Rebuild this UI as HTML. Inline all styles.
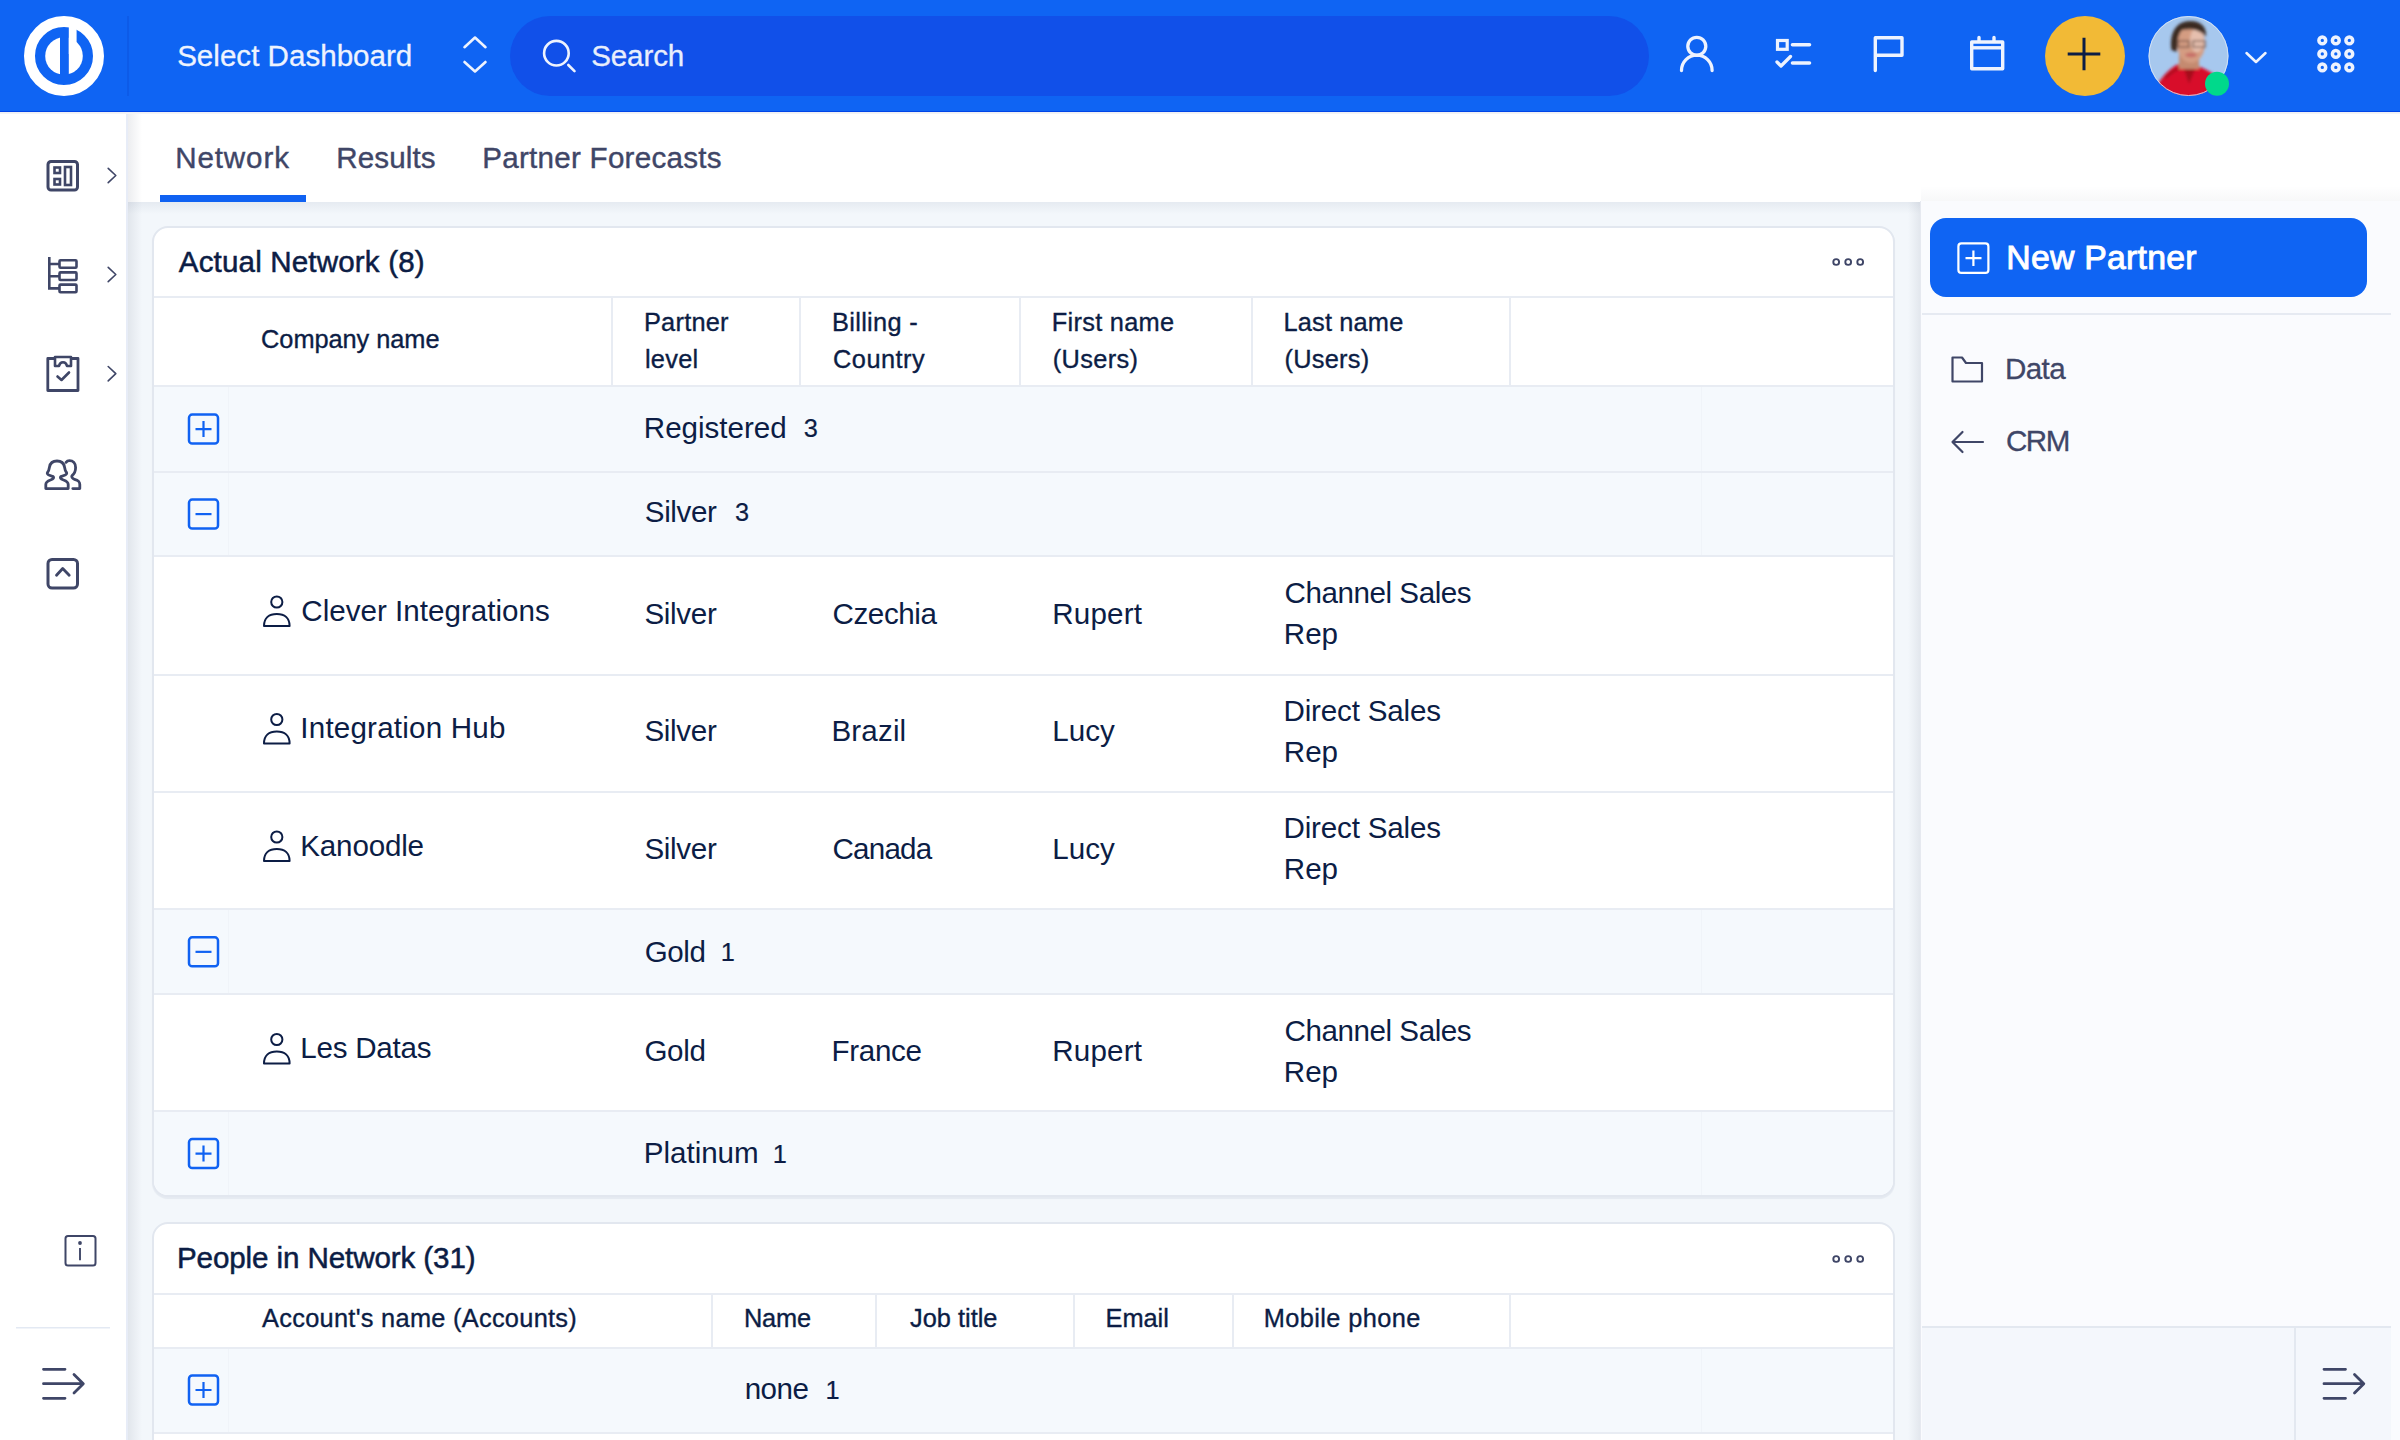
<!DOCTYPE html><html><head><meta charset="utf-8"><style>
*{margin:0;padding:0;box-sizing:border-box}
html,body{width:2400px;height:1440px;overflow:hidden;background:#f3f7fb;font-family:"Liberation Sans",sans-serif}
.t{position:absolute;line-height:1;white-space:nowrap}
.a{position:absolute}
svg{position:absolute;left:0;top:0;overflow:visible}
</style></head><body>
<div class="a" style="left:0;top:0;width:2400px;height:112px;background:#0f64f3"></div><div class="a" style="left:0;top:112px;width:128px;height:1328px;background:#fff;border-right:2px solid #e7ecf7"></div><div class="a" style="left:128px;top:112px;width:2272px;height:90px;background:#fff"></div><div class="a" style="left:128px;top:202px;width:1793px;height:12px;background:linear-gradient(to bottom,rgba(40,60,100,0.065),rgba(40,60,100,0))"></div><div class="a" style="left:128px;top:112px;width:14px;height:1328px;background:linear-gradient(to right,rgba(40,50,80,0.085),rgba(40,50,80,0))"></div><div class="a" style="left:1908px;top:202px;width:13px;height:1238px;background:linear-gradient(to left,rgba(40,50,80,0.085),rgba(40,50,80,0))"></div><div class="a" style="left:1921px;top:186px;width:479px;height:15px;background:linear-gradient(to top,rgba(40,50,80,0.035),rgba(40,50,80,0))"></div><div class="a" style="left:1920px;top:201px;width:480px;height:1239px;background:#fafbfe;border-left:1px solid #e6e9f0"></div><div class="a" style="left:0;top:110.5px;width:2400px;height:1.5px;background:#0044e8"></div><div class="a" style="left:0;top:112px;width:2400px;height:2px;background:linear-gradient(#eceef2,#f4f5f8)"></div><div class="a" style="left:160px;top:195px;width:146px;height:7px;background:#1062f2"></div><div class="a" style="left:152px;top:226px;width:1743px;height:971px;background:#fff;border:2px solid #e2e7ef;border-radius:16px;box-shadow:0 1.5px 1px rgba(20,40,80,0.06);overflow:hidden"><div class="a" style="left:-2px;top:67.5px;width:1743px;height:2px;background:#e8ecf3"></div><div class="a" style="left:-2px;top:157px;width:1743px;height:2px;background:#e8ecf3"></div><div class="a" style="left:457px;top:69px;width:2px;height:88px;background:#e8ecf3"></div><div class="a" style="left:644.5px;top:69px;width:2px;height:88px;background:#e8ecf3"></div><div class="a" style="left:864.5px;top:69px;width:2px;height:88px;background:#e8ecf3"></div><div class="a" style="left:1096.7px;top:69px;width:2px;height:88px;background:#e8ecf3"></div><div class="a" style="left:1354.6px;top:69px;width:2px;height:88px;background:#e8ecf3"></div><div class="a" style="left:0px;top:159px;width:1739px;height:84px;background:#f5f9fd"></div><div class="a" style="left:74px;top:159px;width:1px;height:84px;background:#f0f4f9"></div><div class="a" style="left:1547px;top:159px;width:1px;height:84px;background:#f0f4f9"></div><div class="a" style="left:0px;top:244.5px;width:1739px;height:83.0px;background:#f5f9fd"></div><div class="a" style="left:74px;top:244.5px;width:1px;height:83.0px;background:#f0f4f9"></div><div class="a" style="left:1547px;top:244.5px;width:1px;height:83.0px;background:#f0f4f9"></div><div class="a" style="left:0px;top:682px;width:1739px;height:83.5px;background:#f5f9fd"></div><div class="a" style="left:74px;top:682px;width:1px;height:83.5px;background:#f0f4f9"></div><div class="a" style="left:1547px;top:682px;width:1px;height:83.5px;background:#f0f4f9"></div><div class="a" style="left:0px;top:884px;width:1739px;height:83px;background:#f5f9fd"></div><div class="a" style="left:74px;top:884px;width:1px;height:83px;background:#f0f4f9"></div><div class="a" style="left:1547px;top:884px;width:1px;height:83px;background:#f0f4f9"></div><div class="a" style="left:-2px;top:242.8px;width:1743px;height:2px;background:#e8ecf3"></div><div class="a" style="left:-2px;top:327.20000000000005px;width:1743px;height:2px;background:#e8ecf3"></div><div class="a" style="left:-2px;top:445.5px;width:1743px;height:2px;background:#e8ecf3"></div><div class="a" style="left:-2px;top:562.5px;width:1743px;height:2px;background:#e8ecf3"></div><div class="a" style="left:-2px;top:680.3px;width:1743px;height:2px;background:#e8ecf3"></div><div class="a" style="left:-2px;top:765.2px;width:1743px;height:2px;background:#e8ecf3"></div><div class="a" style="left:-2px;top:882.3px;width:1743px;height:2px;background:#e8ecf3"></div></div><div class="a" style="left:152px;top:1222px;width:1743px;height:400px;background:#fff;border:2px solid #e2e7ef;border-radius:16px;overflow:hidden"><div class="a" style="left:-2px;top:68.5px;width:1743px;height:2px;background:#e8ecf3"></div><div class="a" style="left:-2px;top:122.5px;width:1743px;height:2px;background:#e8ecf3"></div><div class="a" style="left:556.7px;top:70px;width:2px;height:52.5px;background:#e8ecf3"></div><div class="a" style="left:720.5px;top:70px;width:2px;height:52.5px;background:#e8ecf3"></div><div class="a" style="left:919px;top:70px;width:2px;height:52.5px;background:#e8ecf3"></div><div class="a" style="left:1077.6px;top:70px;width:2px;height:52.5px;background:#e8ecf3"></div><div class="a" style="left:1354.6px;top:70px;width:2px;height:52.5px;background:#e8ecf3"></div><div class="a" style="left:0px;top:124.5px;width:1739px;height:83.5px;background:#f5f9fd"></div><div class="a" style="left:74px;top:124.5px;width:1px;height:83.5px;background:#f0f4f9"></div><div class="a" style="left:1547px;top:124.5px;width:1px;height:83.5px;background:#f0f4f9"></div><div class="a" style="left:-2px;top:207.79999999999995px;width:1743px;height:2px;background:#e8ecf3"></div></div><div class="a" style="left:1930px;top:218px;width:437px;height:79px;border-radius:16px;background:#0f64f3"></div><div class="a" style="left:1922px;top:313px;width:469px;height:2px;background:#e6eaf2"></div><div class="a" style="left:1922px;top:1326px;width:469px;height:2px;background:#e3e8f0"></div><div class="a" style="left:1922px;top:1328px;width:469px;height:112px;background:#f4f7fc"></div><div class="a" style="left:2294px;top:1328px;width:2px;height:112px;background:#e3e8f0"></div>
<svg width="2400" height="1440" viewBox="0 0 2400 1440"><circle cx="64" cy="56" r="18.8" fill="#fff"/><rect x="60" y="24" width="8.8" height="52" fill="#0f64f3"/><rect x="68.8" y="24" width="7.8" height="30" fill="#fff"/><circle cx="64" cy="56" r="34.5" fill="none" stroke="#fff" stroke-width="11"/><rect x="127" y="16" width="2" height="80" fill="#0d5be8"/><path d="M464.5 47.2 L475 37.5 L485.5 47.2 M464.5 62 L475 71.5 L485.5 62" fill="none" stroke="#eef3fe" stroke-width="2.6" stroke-linecap="round" stroke-linejoin="round"/><rect x="510" y="16" width="1139" height="80" rx="40" fill="#1150e9"/><circle cx="556.4" cy="53.2" r="12.3" fill="none" stroke="#eef3fe" stroke-width="2.6"/><path d="M568.3 65 L574.5 71.2" stroke="#eef3fe" stroke-width="2.6" stroke-linecap="round"/><circle cx="1696.8" cy="46.3" r="9" fill="none" stroke="#eef3fe" stroke-width="3.3"/><path d="M1681.5 70.5 A15.3 15.3 0 0 1 1712.1 70.5" fill="none" stroke="#eef3fe" stroke-width="3.3" stroke-linecap="round"/><rect x="1777.5" y="40.5" width="9.7" height="8.8" fill="none" stroke="#eef3fe" stroke-width="3.2"/><path d="M1792.5 44.8 H1809.5 M1792.5 63 H1809.5" stroke="#eef3fe" stroke-width="3.6" stroke-linecap="round"/><path d="M1777 62 L1781 66 L1790.5 56.5" fill="none" stroke="#eef3fe" stroke-width="3.3" stroke-linecap="round" stroke-linejoin="round"/><path d="M1875.3 70.5 V37.8 H1902 V55.2 H1875.3" fill="none" stroke="#eef3fe" stroke-width="3.4" stroke-linecap="round" stroke-linejoin="round"/><rect x="1971.7" y="42" width="31" height="26.8" fill="none" stroke="#eef3fe" stroke-width="3.4" stroke-linejoin="round"/><path d="M1971.7 47.8 H2002.7" stroke="#eef3fe" stroke-width="3.4"/><path d="M1979 37.5 V41 M1994 37.5 V41" stroke="#eef3fe" stroke-width="3.4" stroke-linecap="round"/><circle cx="2085" cy="56" r="40" fill="#f2ba36"/><path d="M2067.7 54 H2100.3 M2084 37.7 V70.3" stroke="#0c1d45" stroke-width="3"/><defs><clipPath id="av"><circle cx="2188.5" cy="56" r="40"/></clipPath><filter id="bl"><feGaussianBlur stdDeviation="1.6"/></filter></defs><circle cx="2188.5" cy="56" r="40" fill="#a7c8ee"/><g clip-path="url(#av)" filter="url(#bl)"><path d="M2150 104 L2156 88 C2161 77 2169 69 2178 64 L2190 69 L2198 66 C2206 69 2213 73 2221 80 L2234 104 Z" fill="#d80f2b"/><path d="M2183 66 L2189 84 L2196 67 Z" fill="#a50a1e"/><path d="M2165 78 C2170 73 2175 70 2179 68" stroke="#a00a1c" stroke-width="2" fill="none"/><rect x="2179" y="54" width="20" height="15" fill="#c48a70"/><ellipse cx="2191" cy="43.5" rx="14" ry="19.5" fill="#d49c82"/><ellipse cx="2197" cy="40" rx="7" ry="12" fill="#e6bfae"/><path d="M2171.5 50 C2169 32 2177 21 2190 21 C2201 21 2207 27 2206 37 C2201 30 2192 28 2182 30 C2178 34 2177 42 2177 52 Z" fill="#3b2a22"/><path d="M2178 41 H2189 V47 H2178 Z M2193 41 H2205 V47 H2193 Z" fill="none" stroke="#5a4038" stroke-width="1.6" opacity="0.7"/><ellipse cx="2191" cy="55" rx="6" ry="2.2" fill="#c66c66"/></g><circle cx="2188.5" cy="56" r="39.5" fill="none" stroke="#dfe9f7" stroke-width="1" opacity="0.8"/><circle cx="2217" cy="83.8" r="12" fill="#00d98b"/><path d="M2246.5 53 L2256 62 L2265.5 53" fill="none" stroke="#eef3fe" stroke-width="2.5" stroke-linecap="round" stroke-linejoin="round"/><circle cx="2322.3" cy="40.4" r="3.4" fill="none" stroke="#eef3fe" stroke-width="3.5"/><circle cx="2322.3" cy="53.9" r="3.4" fill="none" stroke="#eef3fe" stroke-width="3.5"/><circle cx="2322.3" cy="67.4" r="3.4" fill="none" stroke="#eef3fe" stroke-width="3.5"/><circle cx="2335.8" cy="40.4" r="3.4" fill="none" stroke="#eef3fe" stroke-width="3.5"/><circle cx="2335.8" cy="53.9" r="3.4" fill="none" stroke="#eef3fe" stroke-width="3.5"/><circle cx="2335.8" cy="67.4" r="3.4" fill="none" stroke="#eef3fe" stroke-width="3.5"/><circle cx="2349.3" cy="40.4" r="3.4" fill="none" stroke="#eef3fe" stroke-width="3.5"/><circle cx="2349.3" cy="53.9" r="3.4" fill="none" stroke="#eef3fe" stroke-width="3.5"/><circle cx="2349.3" cy="67.4" r="3.4" fill="none" stroke="#eef3fe" stroke-width="3.5"/><rect x="48" y="161.5" width="29.5" height="28.5" rx="3" fill="none" stroke="#3f4667" stroke-width="3"/><rect x="54.5" y="167.5" width="5.5" height="5.5" fill="none" stroke="#3f4667" stroke-width="2.6"/><rect x="54.5" y="179" width="5.5" height="5.5" fill="none" stroke="#3f4667" stroke-width="2.6"/><rect x="65" y="167" width="6" height="18" fill="none" stroke="#3f4667" stroke-width="2.6"/><path d="M108.2 168.3 L115.8 175.5 L108.2 182.7" fill="none" stroke="#3f4667" stroke-width="1.6" stroke-linecap="round" stroke-linejoin="round"/><path d="M108.2 267.3 L115.8 274.5 L108.2 281.7" fill="none" stroke="#3f4667" stroke-width="1.6" stroke-linecap="round" stroke-linejoin="round"/><path d="M108.2 366.5 L115.8 373.7 L108.2 380.9" fill="none" stroke="#3f4667" stroke-width="1.6" stroke-linecap="round" stroke-linejoin="round"/><path d="M49.3 257 V288.4 H59 M49.3 264 H59 M49.3 276.2 H59" fill="none" stroke="#3f4667" stroke-width="2.6"/><rect x="59.5" y="260.2" width="17" height="7.6" rx="1" fill="none" stroke="#3f4667" stroke-width="2.6"/><rect x="59.5" y="272.4" width="17" height="7.6" rx="1" fill="none" stroke="#3f4667" stroke-width="2.6"/><rect x="59.5" y="284.59999999999997" width="17" height="7.6" rx="1" fill="none" stroke="#3f4667" stroke-width="2.6"/><path d="M55 358.5 H47.8 V390.5 H78 V358.5 H71" fill="none" stroke="#3f4667" stroke-width="2.8" stroke-linejoin="round"/><path d="M55 357 H71 V366 H67 C66 361 60 361 59 366 H55 Z" fill="none" stroke="#3f4667" stroke-width="2.6" stroke-linejoin="round"/><path d="M57.5 376.5 L61.5 380 L69 372.5" fill="none" stroke="#3f4667" stroke-width="2.6" stroke-linecap="round" stroke-linejoin="round"/><path d="M45.8 488.6 V484.5 C45.8 482 47.5 481 50.5 480 C53.5 479 54.5 477.5 52.5 476.3 C49.5 475.5 46.5 474.5 47.5 472.5 C48.8 471 49.2 469 49.5 467 C50.3 462.5 53.5 461 57 461 C60.5 461 63.7 462.5 64.5 467 C64.8 469 65.2 471 66.5 472.5 C67.5 474.5 64.5 475.5 61.5 476.3 C59.5 477.5 60.5 479 63.5 480 C66.5 481 68.2 482 68.2 484.5 V488.6 Z" fill="none" stroke="#3f4667" stroke-width="2.8" stroke-linejoin="round"/><path d="M66 462.3 C67 461 68.3 460.6 69.5 460.6 C73 460.6 75.6 463.5 75.6 467.5 C75.6 471.5 74.5 473.5 72.3 475.3 C71 476.5 72 478.5 74.5 479.3 C78.5 480.5 79.8 481.5 79.8 484.5 V488.6 H72.8" fill="none" stroke="#3f4667" stroke-width="2.8" stroke-linecap="round" stroke-linejoin="round"/><rect x="48" y="559.5" width="29.5" height="28.5" rx="4" fill="none" stroke="#3f4667" stroke-width="3"/><path d="M56.5 575.3 L62.7 568.5 L69.2 575.3" fill="none" stroke="#3f4667" stroke-width="2.8" stroke-linecap="round" stroke-linejoin="round"/><rect x="65.5" y="1236" width="30" height="29.5" rx="2.5" fill="none" stroke="#3f4667" stroke-width="2"/><circle cx="80" cy="1243" r="1.9" fill="#3f4667"/><path d="M80 1248 V1260.2" stroke="#3f4667" stroke-width="1.9"/><rect x="16" y="1327" width="94" height="1.5" fill="#e3e9f3"/><path d="M43.5 1369.3 H65 M43.5 1398.3 H65 M43.5 1383.7 H83 M74 1374.5 L83.3 1383.7 L74 1393" fill="none" stroke="#3f4667" stroke-width="2.8" stroke-linecap="round" stroke-linejoin="round"/><path d="M2324 1369.3 H2345.5 M2324 1398.3 H2345.5 M2324 1383.7 H2363.5 M2354.5 1374.5 L2363.8 1383.7 L2354.5 1393" fill="none" stroke="#3f4667" stroke-width="2.8" stroke-linecap="round" stroke-linejoin="round"/><circle cx="1836.2" cy="262" r="2.9" fill="none" stroke="#3f4667" stroke-width="1.9"/><circle cx="1848.2" cy="262" r="2.9" fill="none" stroke="#3f4667" stroke-width="1.9"/><circle cx="1860.2" cy="262" r="2.9" fill="none" stroke="#3f4667" stroke-width="1.9"/><rect x="189.0" y="414.6" width="29" height="29" rx="3.2" fill="none" stroke="#1062f2" stroke-width="2.5"/><path d="M195.5 429.1 H211.5 M203.5 421.1 V437.1" stroke="#1062f2" stroke-width="2.2"/><rect x="189.0" y="499.6" width="29" height="29" rx="3.2" fill="none" stroke="#1062f2" stroke-width="2.5"/><path d="M195.5 514.1 H211.5" stroke="#1062f2" stroke-width="2.2"/><rect x="189.0" y="937.35" width="29" height="29" rx="3.2" fill="none" stroke="#1062f2" stroke-width="2.5"/><path d="M195.5 951.85 H211.5" stroke="#1062f2" stroke-width="2.2"/><rect x="189.0" y="1139.1" width="29" height="29" rx="3.2" fill="none" stroke="#1062f2" stroke-width="2.5"/><path d="M195.5 1153.6 H211.5 M203.5 1145.6 V1161.6" stroke="#1062f2" stroke-width="2.2"/><circle cx="276.8" cy="602.0" r="5.6" fill="none" stroke="#0c1d45" stroke-width="2"/><path d="M264 626.0 C264 618.0 269 614.0 276.8 614.0 C284.6 614.0 289.6 618.0 289.6 626.0 Z" fill="none" stroke="#0c1d45" stroke-width="2" stroke-linejoin="round"/><circle cx="276.8" cy="719.5" r="5.6" fill="none" stroke="#0c1d45" stroke-width="2"/><path d="M264 743.5 C264 735.5 269 731.5 276.8 731.5 C284.6 731.5 289.6 735.5 289.6 743.5 Z" fill="none" stroke="#0c1d45" stroke-width="2" stroke-linejoin="round"/><circle cx="276.8" cy="837.0" r="5.6" fill="none" stroke="#0c1d45" stroke-width="2"/><path d="M264 861.0 C264 853.0 269 849.0 276.8 849.0 C284.6 849.0 289.6 853.0 289.6 861.0 Z" fill="none" stroke="#0c1d45" stroke-width="2" stroke-linejoin="round"/><circle cx="276.8" cy="1039.5" r="5.6" fill="none" stroke="#0c1d45" stroke-width="2"/><path d="M264 1063.5 C264 1055.5 269 1051.5 276.8 1051.5 C284.6 1051.5 289.6 1055.5 289.6 1063.5 Z" fill="none" stroke="#0c1d45" stroke-width="2" stroke-linejoin="round"/><circle cx="1836.2" cy="1259" r="2.9" fill="none" stroke="#3f4667" stroke-width="1.9"/><circle cx="1848.2" cy="1259" r="2.9" fill="none" stroke="#3f4667" stroke-width="1.9"/><circle cx="1860.2" cy="1259" r="2.9" fill="none" stroke="#3f4667" stroke-width="1.9"/><rect x="189.0" y="1375.5" width="29" height="29" rx="3.2" fill="none" stroke="#1062f2" stroke-width="2.5"/><path d="M195.5 1390 H211.5 M203.5 1382 V1398" stroke="#1062f2" stroke-width="2.2"/><rect x="1958.4" y="243.4" width="30" height="29.5" rx="3" fill="none" stroke="#fff" stroke-width="2.2"/><path d="M1965.5 258.2 H1981.5 M1973.4 250.5 V266" stroke="#fff" stroke-width="2.2"/><path d="M1952.5 381.5 V357.5 H1962 L1966 363 H1982 V381.5 Z" fill="none" stroke="#3f4667" stroke-width="2.2" stroke-linejoin="round"/><path d="M1983 442 H1952.5 M1962.5 432 L1952.5 442 L1962.5 452" fill="none" stroke="#3f4667" stroke-width="2.2" stroke-linecap="round" stroke-linejoin="round"/></svg>
<div class="t" style="left:177.15px;top:41.25px;font-size:29.59px;color:#eef3fe;letter-spacing:0.002px;-webkit-text-stroke:0.3px #eef3fe;">Select Dashboard</div><div class="t" style="left:591.15px;top:40.95px;font-size:29.59px;color:#e8eefc;letter-spacing:-0.113px;-webkit-text-stroke:0.3px #e8eefc;">Search</div><div class="t" style="left:175.2px;top:142.65px;font-size:29.59px;color:#3f4667;letter-spacing:0.885px;-webkit-text-stroke:0.4px #3f4667;">Network</div><div class="t" style="left:336.2px;top:142.65px;font-size:29.59px;color:#3f4667;letter-spacing:0.127px;-webkit-text-stroke:0.4px #3f4667;">Results</div><div class="t" style="left:482.2px;top:142.65px;font-size:29.59px;color:#3f4667;letter-spacing:0.27px;-webkit-text-stroke:0.4px #3f4667;">Partner Forecasts</div><div class="t" style="left:178.75px;top:246.75px;font-size:29.59px;color:#0c1d45;letter-spacing:0.152px;-webkit-text-stroke:0.5px #0c1d45;">Actual Network (8)</div><div class="t" style="left:261.07px;top:327.03px;font-size:25.36px;color:#0c1d45;letter-spacing:-0.051px;-webkit-text-stroke:0.35px #0c1d45;">Company name</div><div class="t" style="left:643.97px;top:309.83px;font-size:25.36px;color:#0c1d45;letter-spacing:0.239px;-webkit-text-stroke:0.35px #0c1d45;">Partner</div><div class="t" style="left:644.97px;top:346.53px;font-size:25.36px;color:#0c1d45;letter-spacing:0.257px;-webkit-text-stroke:0.35px #0c1d45;">level</div><div class="t" style="left:832.07px;top:309.83px;font-size:25.36px;color:#0c1d45;letter-spacing:0.306px;-webkit-text-stroke:0.35px #0c1d45;">Billing -</div><div class="t" style="left:833.07px;top:346.53px;font-size:25.36px;color:#0c1d45;letter-spacing:0.456px;-webkit-text-stroke:0.35px #0c1d45;">Country</div><div class="t" style="left:1051.77px;top:309.83px;font-size:25.36px;color:#0c1d45;letter-spacing:0.286px;-webkit-text-stroke:0.35px #0c1d45;">First name</div><div class="t" style="left:1052.77px;top:346.53px;font-size:25.36px;color:#0c1d45;letter-spacing:0.364px;-webkit-text-stroke:0.35px #0c1d45;">(Users)</div><div class="t" style="left:1283.58px;top:309.83px;font-size:25.36px;color:#0c1d45;letter-spacing:0.155px;-webkit-text-stroke:0.35px #0c1d45;">Last name</div><div class="t" style="left:1284.58px;top:346.53px;font-size:25.36px;color:#0c1d45;letter-spacing:0.231px;-webkit-text-stroke:0.35px #0c1d45;">(Users)</div><div class="t" style="left:643.8px;top:412.55px;font-size:29.59px;color:#0c1d45;letter-spacing:-0.01px;">Registered</div><div class="t" style="left:803.7px;top:416.13px;font-size:25.36px;color:#0c1d45;-webkit-text-stroke:0.2px #0c1d45;">3</div><div class="t" style="left:644.8px;top:496.75px;font-size:29.59px;color:#0c1d45;letter-spacing:-0.382px;">Silver</div><div class="t" style="left:735.1px;top:500.33px;font-size:25.36px;color:#0c1d45;-webkit-text-stroke:0.2px #0c1d45;">3</div><div class="t" style="left:644.8px;top:936.85px;font-size:29.59px;color:#0c1d45;letter-spacing:-0.476px;">Gold</div><div class="t" style="left:720.8px;top:940.43px;font-size:25.36px;color:#0c1d45;-webkit-text-stroke:0.2px #0c1d45;">1</div><div class="t" style="left:643.8px;top:1137.95px;font-size:29.59px;color:#0c1d45;letter-spacing:-0.034px;">Platinum</div><div class="t" style="left:772.8px;top:1141.53px;font-size:25.36px;color:#0c1d45;-webkit-text-stroke:0.2px #0c1d45;">1</div><div class="t" style="left:301.3px;top:595.95px;font-size:29.59px;color:#0c1d45;letter-spacing:0.013px;">Clever Integrations</div><div class="t" style="left:644.4px;top:598.75px;font-size:29.59px;color:#0c1d45;letter-spacing:-0.302px;">Silver</div><div class="t" style="left:832.5px;top:598.75px;font-size:29.59px;color:#0c1d45;letter-spacing:-0.402px;">Czechia</div><div class="t" style="left:1052.2px;top:598.75px;font-size:29.59px;color:#0c1d45;letter-spacing:0.208px;">Rupert</div><div class="t" style="left:1284.5px;top:578.35px;font-size:29.59px;color:#0c1d45;letter-spacing:-0.442px;">Channel Sales</div><div class="t" style="left:1283.8px;top:619.25px;font-size:29.59px;color:#0c1d45;">Rep</div><div class="t" style="left:300.3px;top:713.45px;font-size:29.59px;color:#0c1d45;letter-spacing:0.207px;">Integration Hub</div><div class="t" style="left:644.4px;top:716.25px;font-size:29.59px;color:#0c1d45;letter-spacing:-0.302px;">Silver</div><div class="t" style="left:831.5px;top:716.25px;font-size:29.59px;color:#0c1d45;letter-spacing:0.142px;">Brazil</div><div class="t" style="left:1052.2px;top:716.25px;font-size:29.59px;color:#0c1d45;letter-spacing:0.07px;">Lucy</div><div class="t" style="left:1283.5px;top:695.85px;font-size:29.59px;color:#0c1d45;letter-spacing:-0.178px;">Direct Sales</div><div class="t" style="left:1283.8px;top:736.75px;font-size:29.59px;color:#0c1d45;">Rep</div><div class="t" style="left:300.3px;top:830.95px;font-size:29.59px;color:#0c1d45;letter-spacing:-0.178px;">Kanoodle</div><div class="t" style="left:644.4px;top:833.75px;font-size:29.59px;color:#0c1d45;letter-spacing:-0.302px;">Silver</div><div class="t" style="left:832.5px;top:833.75px;font-size:29.59px;color:#0c1d45;letter-spacing:-0.792px;">Canada</div><div class="t" style="left:1052.2px;top:833.75px;font-size:29.59px;color:#0c1d45;letter-spacing:0.07px;">Lucy</div><div class="t" style="left:1283.5px;top:813.35px;font-size:29.59px;color:#0c1d45;letter-spacing:-0.178px;">Direct Sales</div><div class="t" style="left:1283.8px;top:854.25px;font-size:29.59px;color:#0c1d45;">Rep</div><div class="t" style="left:300.3px;top:1033.45px;font-size:29.59px;color:#0c1d45;letter-spacing:-0.248px;">Les Datas</div><div class="t" style="left:644.4px;top:1036.25px;font-size:29.59px;color:#0c1d45;letter-spacing:-0.343px;">Gold</div><div class="t" style="left:831.5px;top:1036.25px;font-size:29.59px;color:#0c1d45;letter-spacing:-0.321px;">France</div><div class="t" style="left:1052.2px;top:1036.25px;font-size:29.59px;color:#0c1d45;letter-spacing:0.208px;">Rupert</div><div class="t" style="left:1284.5px;top:1015.85px;font-size:29.59px;color:#0c1d45;letter-spacing:-0.442px;">Channel Sales</div><div class="t" style="left:1283.8px;top:1056.75px;font-size:29.59px;color:#0c1d45;">Rep</div><div class="t" style="left:176.95px;top:1243.45px;font-size:29.59px;color:#0c1d45;letter-spacing:-0.105px;-webkit-text-stroke:0.5px #0c1d45;">People in Network (31)</div><div class="t" style="left:262.07px;top:1306.13px;font-size:25.36px;color:#0c1d45;letter-spacing:0.284px;-webkit-text-stroke:0.35px #0c1d45;">Account's name (Accounts)</div><div class="t" style="left:743.88px;top:1306.13px;font-size:25.36px;color:#0c1d45;letter-spacing:-0.131px;-webkit-text-stroke:0.35px #0c1d45;">Name</div><div class="t" style="left:910.07px;top:1306.13px;font-size:25.36px;color:#0c1d45;-webkit-text-stroke:0.35px #0c1d45;">Job title</div><div class="t" style="left:1105.47px;top:1306.13px;font-size:25.36px;color:#0c1d45;letter-spacing:-0.007px;-webkit-text-stroke:0.35px #0c1d45;">Email</div><div class="t" style="left:1263.67px;top:1306.13px;font-size:25.36px;color:#0c1d45;letter-spacing:0.408px;-webkit-text-stroke:0.35px #0c1d45;">Mobile phone</div><div class="t" style="left:744.7px;top:1374.25px;font-size:29.59px;color:#0c1d45;letter-spacing:-0.517px;">none</div><div class="t" style="left:825.5px;top:1377.83px;font-size:25.36px;color:#0c1d45;-webkit-text-stroke:0.2px #0c1d45;">1</div><div class="t" style="left:2006.25px;top:241.08px;font-size:33.81px;color:#ffffff;letter-spacing:0.252px;-webkit-text-stroke:0.9px #ffffff;">New Partner</div><div class="t" style="left:2004.95px;top:354.15px;font-size:29.59px;color:#3f4667;letter-spacing:-0.609px;-webkit-text-stroke:0.3px #3f4667;">Data</div><div class="t" style="left:2005.95px;top:425.95px;font-size:29.59px;color:#3f4667;letter-spacing:-1.5px;-webkit-text-stroke:0.3px #3f4667;">CRM</div>
</body></html>
